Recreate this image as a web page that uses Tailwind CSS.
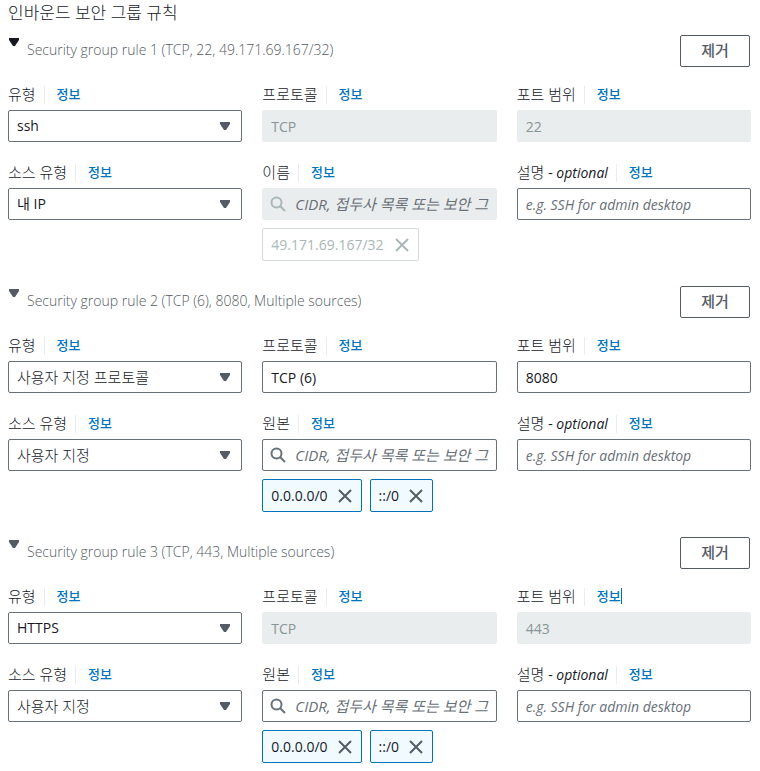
<!DOCTYPE html>
<html lang="ko">
<head>
  <meta charset="UTF-8">
  <meta name="viewport" content="width=device-width, initial-scale=1.0">
  <title>인바운드 보안 그룹 규칙</title>
  <script src="https://cdn.jsdelivr.net/npm/@tailwindcss/browser@4"></script>
</head>
<body class="bg-white text-[#16191f] font-['Open_Sans','Noto_Sans_CJK_KR',sans-serif] text-sm leading-5">

  <!-- Shared icons -->
  <svg class="hidden" xmlns="http://www.w3.org/2000/svg">
    <symbol id="caret" viewBox="0 0 10 8"><path d="M0 0h10v2L6 8H4L0 2z" fill="currentColor"/></symbol>
    <symbol id="search" viewBox="0 0 16 16"><circle cx="6.5" cy="6.5" r="5" fill="none" stroke="currentColor" stroke-width="2"/><path d="M10 10l5 5" stroke="currentColor" stroke-width="2"/></symbol>
    <symbol id="close" viewBox="0 0 14 14"><path d="M1 1l12 12M13 1L1 13" fill="none" stroke="currentColor" stroke-width="2"/></symbol>
  </svg>

  <main class="pl-2 pr-[9px] pb-2">
    <h2 class="text-[17px] leading-[26px] mb-[9px] font-light">인바운드 보안 그룹 규칙</h2>

    <!-- Rule 1 -->
    <section class="mb-[25px]">
      <header class="flex items-start justify-between mb-[19px] mr-px">
        <div class="flex items-start gap-2 pt-[3px]">
          <button type="button" aria-label="규칙 1 접기" class="w-3 px-px"><svg class="w-full h-2"><use href="#caret"/></svg></button>
          <h3 class="font-light text-[#545b64] mt-0.5 -ml-px">Security group rule 1 (TCP, 22, 49.171.69.167/32)</h3>
        </div>
        <button type="button" class="h-8 w-[70px] border border-[#545b64] rounded-xs text-[15px] leading-7 pb-0.5 font-medium text-[#545b64]">제거</button>
      </header>
      <div class="grid grid-cols-3 gap-x-5 gap-y-[22px]">
        <div>
          <div class="flex h-[18px] mb-1.5 leading-4">
            <label for="type-1" class="text-[15px] font-light pr-2">유형</label>
            <a href="#" class="border-l border-[#eaeded] pl-3 text-[13px] font-medium text-[#0073bb]">정보</a>
          </div>
          <div class="relative">
            <select id="type-1" class="block appearance-none w-full h-8 px-2 border border-[#687078] rounded-xs bg-white"><option>ssh</option></select>
            <svg class="absolute right-3 top-3 w-2.5 h-2 text-[#545b64] pointer-events-none"><use href="#caret"/></svg>
          </div>
        </div>
        <div>
          <div class="flex h-[18px] mb-1.5 leading-4">
            <label for="protocol-1" class="text-[15px] font-light pr-2">프로토콜</label>
            <a href="#" class="border-l border-[#eaeded] pl-3 text-[13px] font-medium text-[#0073bb]">정보</a>
          </div>
          <input id="protocol-1" type="text" value="TCP" disabled class="block w-full h-8 px-[9px] rounded-xs bg-[#eaeded] text-[#879596]">
        </div>
        <div>
          <div class="flex h-[18px] mb-1.5 leading-4">
            <label for="port-1" class="text-[15px] font-light pr-2">포트 범위</label>
            <a href="#" class="border-l border-[#eaeded] pl-3 text-[13px] font-medium text-[#0073bb]">정보</a>
          </div>
          <input id="port-1" type="text" value="22" disabled class="block w-full h-8 px-[9px] rounded-xs bg-[#eaeded] text-[#879596]">
        </div>
        <div>
          <div class="flex h-[18px] mb-1.5 leading-4">
            <label for="source-type-1" class="text-[15px] font-light pr-2">소스 유형</label>
            <a href="#" class="border-l border-[#eaeded] pl-3 text-[13px] font-medium text-[#0073bb]">정보</a>
          </div>
          <div class="relative">
            <select id="source-type-1" class="block appearance-none w-full h-8 px-2 border border-[#687078] rounded-xs bg-white"><option>내 IP</option></select>
            <svg class="absolute right-3 top-3 w-2.5 h-2 text-[#545b64] pointer-events-none"><use href="#caret"/></svg>
          </div>
        </div>
        <div>
          <div class="flex h-[18px] mb-1.5 leading-4">
            <label for="source-1" class="text-[15px] font-light pr-2">이름</label>
            <a href="#" class="border-l border-[#eaeded] pl-3 text-[13px] font-medium text-[#0073bb]">정보</a>
          </div>
          <div class="relative">
            <svg class="absolute left-2 top-2 w-4 h-4 text-[#aab7b8] pointer-events-none"><use href="#search"/></svg>
            <input id="source-1" type="text" placeholder="CIDR, 접두사 목록 또는 보안 그룹" disabled class="block w-full h-8 pl-[33px] pr-2 rounded-xs bg-[#eaeded] text-[15px] placeholder:italic placeholder:text-[#687078]">
          </div>
          <div class="flex gap-2 mt-2">
            <span class="flex items-center gap-[11px] h-[33px] px-2 pr-[9px] border border-[#d5dbdb] rounded-xs text-[#aab7b8]">49.171.69.167/32
              <button type="button" disabled aria-label="49.171.69.167/32 제거"><svg class="block w-3.5 h-3.5"><use href="#close"/></svg></button>
            </span>
          </div>
        </div>
        <div>
          <div class="flex h-[18px] mb-1.5 leading-4">
            <label for="desc-1" class="text-[15px] font-light pr-2">설명 <span class="text-sm leading-4 font-normal">- <i>optional</i></span></label>
            <a href="#" class="border-l border-[#eaeded] pl-3 text-[13px] font-medium text-[#0073bb]">정보</a>
          </div>
          <input id="desc-1" type="text" placeholder="e.g. SSH for admin desktop" class="block w-full h-8 px-2 border border-[#687078] rounded-xs placeholder:italic placeholder:text-[#687078]">
        </div>
      </div>
    </section>

    <!-- Rule 2 -->
    <section class="mb-[25px]">
      <header class="flex items-start justify-between mb-[19px] mr-px">
        <div class="flex items-start gap-2 pt-[3px]">
          <button type="button" aria-label="규칙 2 접기" class="w-3 px-px text-[#545b64]"><svg class="w-full h-2"><use href="#caret"/></svg></button>
          <h3 class="font-light text-[#545b64] mt-0.5 -ml-px">Security group rule 2 (TCP (6), 8080, Multiple sources)</h3>
        </div>
        <button type="button" class="h-8 w-[70px] border border-[#545b64] rounded-xs text-[15px] leading-7 pb-0.5 font-medium text-[#545b64]">제거</button>
      </header>
      <div class="grid grid-cols-3 gap-x-5 gap-y-[22px]">
        <div>
          <div class="flex h-[18px] mb-1.5 leading-4">
            <label for="type-2" class="text-[15px] font-light pr-2">유형</label>
            <a href="#" class="border-l border-[#eaeded] pl-3 text-[13px] font-medium text-[#0073bb]">정보</a>
          </div>
          <div class="relative">
            <select id="type-2" class="block appearance-none w-full h-8 px-2 border border-[#687078] rounded-xs bg-white text-[15px] font-light"><option>사용자 지정 프로토콜</option></select>
            <svg class="absolute right-3 top-3 w-2.5 h-2 text-[#545b64] pointer-events-none"><use href="#caret"/></svg>
          </div>
        </div>
        <div>
          <div class="flex h-[18px] mb-1.5 leading-4">
            <label for="protocol-2" class="text-[15px] font-light pr-2">프로토콜</label>
            <a href="#" class="border-l border-[#eaeded] pl-3 text-[13px] font-medium text-[#0073bb]">정보</a>
          </div>
          <input id="protocol-2" type="text" value="TCP (6)" class="block w-full h-8 px-2 border border-[#687078] rounded-xs">
        </div>
        <div>
          <div class="flex h-[18px] mb-1.5 leading-4">
            <label for="port-2" class="text-[15px] font-light pr-2">포트 범위</label>
            <a href="#" class="border-l border-[#eaeded] pl-3 text-[13px] font-medium text-[#0073bb]">정보</a>
          </div>
          <input id="port-2" type="text" value="8080" class="block w-full h-8 px-2 border border-[#687078] rounded-xs">
        </div>
        <div>
          <div class="flex h-[18px] mb-1.5 leading-4">
            <label for="source-type-2" class="text-[15px] font-light pr-2">소스 유형</label>
            <a href="#" class="border-l border-[#eaeded] pl-3 text-[13px] font-medium text-[#0073bb]">정보</a>
          </div>
          <div class="relative">
            <select id="source-type-2" class="block appearance-none w-full h-8 px-2 border border-[#687078] rounded-xs bg-white text-[15px] font-light"><option>사용자 지정</option></select>
            <svg class="absolute right-3 top-3 w-2.5 h-2 text-[#545b64] pointer-events-none"><use href="#caret"/></svg>
          </div>
        </div>
        <div>
          <div class="flex h-[18px] mb-1.5 leading-4">
            <label for="source-2" class="text-[15px] font-light pr-2">원본</label>
            <a href="#" class="border-l border-[#eaeded] pl-3 text-[13px] font-medium text-[#0073bb]">정보</a>
          </div>
          <div class="relative">
            <svg class="absolute left-2 top-2 w-4 h-4 text-[#687078] pointer-events-none"><use href="#search"/></svg>
            <input id="source-2" type="text" placeholder="CIDR, 접두사 목록 또는 보안 그룹" class="block w-full h-8 pl-8 pr-[7px] border border-[#687078] rounded-xs text-[15px] placeholder:italic placeholder:text-[#687078]">
          </div>
          <div class="flex gap-2 mt-2">
            <span class="flex items-center gap-[10px] h-[33px] px-2 pr-[9px] border border-[#0073bb] rounded-xs bg-[#f1faff]">0.0.0.0/0
              <button type="button" aria-label="0.0.0.0/0 제거" class="text-[#545b64]"><svg class="block w-3.5 h-3.5"><use href="#close"/></svg></button>
            </span>
            <span class="flex items-center gap-[10px] h-[33px] px-2 pr-[9px] border border-[#0073bb] rounded-xs bg-[#f1faff]">::/0
              <button type="button" aria-label="::/0 제거" class="text-[#545b64]"><svg class="block w-3.5 h-3.5"><use href="#close"/></svg></button>
            </span>
          </div>
        </div>
        <div>
          <div class="flex h-[18px] mb-1.5 leading-4">
            <label for="desc-2" class="text-[15px] font-light pr-2">설명 <span class="text-sm leading-4 font-normal">- <i>optional</i></span></label>
            <a href="#" class="border-l border-[#eaeded] pl-3 text-[13px] font-medium text-[#0073bb]">정보</a>
          </div>
          <input id="desc-2" type="text" placeholder="e.g. SSH for admin desktop" class="block w-full h-8 px-2 border border-[#687078] rounded-xs placeholder:italic placeholder:text-[#687078]">
        </div>
      </div>
    </section>

    <!-- Rule 3 -->
    <section>
      <header class="flex items-start justify-between mb-[19px] mr-px">
        <div class="flex items-start gap-2 pt-[3px]">
          <button type="button" aria-label="규칙 3 접기" class="w-3 px-px text-[#545b64]"><svg class="w-full h-2"><use href="#caret"/></svg></button>
          <h3 class="font-light text-[#545b64] mt-0.5 -ml-px">Security group rule 3 (TCP, 443, Multiple sources)</h3>
        </div>
        <button type="button" class="h-8 w-[70px] border border-[#545b64] rounded-xs text-[15px] leading-7 pb-0.5 font-medium text-[#545b64]">제거</button>
      </header>
      <div class="grid grid-cols-3 gap-x-5 gap-y-[22px]">
        <div>
          <div class="flex h-[18px] mb-1.5 leading-4">
            <label for="type-3" class="text-[15px] font-light pr-2">유형</label>
            <a href="#" class="border-l border-[#eaeded] pl-3 text-[13px] font-medium text-[#0073bb]">정보</a>
          </div>
          <div class="relative">
            <select id="type-3" class="block appearance-none w-full h-8 px-2 border border-[#687078] rounded-xs bg-white"><option>HTTPS</option></select>
            <svg class="absolute right-3 top-3 w-2.5 h-2 text-[#545b64] pointer-events-none"><use href="#caret"/></svg>
          </div>
        </div>
        <div>
          <div class="flex h-[18px] mb-1.5 leading-4">
            <label for="protocol-3" class="text-[15px] font-light pr-2">프로토콜</label>
            <a href="#" class="border-l border-[#eaeded] pl-3 text-[13px] font-medium text-[#0073bb]">정보</a>
          </div>
          <input id="protocol-3" type="text" value="TCP" disabled class="block w-full h-8 px-[9px] rounded-xs bg-[#eaeded] text-[#879596]">
        </div>
        <div>
          <div class="flex h-[18px] mb-1.5 leading-4">
            <label for="port-3" class="text-[15px] font-light pr-2">포트 범위</label>
            <a href="#" class="border-l border-[#eaeded] pl-3 text-[13px] font-medium text-[#0073bb]"><span class="block border-r border-[#0073bb]">정보</span></a>
          </div>
          <input id="port-3" type="text" value="443" disabled class="block w-full h-8 px-[9px] rounded-xs bg-[#eaeded] text-[#879596]">
        </div>
        <div>
          <div class="flex h-[18px] mb-1.5 leading-4">
            <label for="source-type-3" class="text-[15px] font-light pr-2">소스 유형</label>
            <a href="#" class="border-l border-[#eaeded] pl-3 text-[13px] font-medium text-[#0073bb]">정보</a>
          </div>
          <div class="relative">
            <select id="source-type-3" class="block appearance-none w-full h-8 px-2 border border-[#687078] rounded-xs bg-white text-[15px] font-light"><option>사용자 지정</option></select>
            <svg class="absolute right-3 top-3 w-2.5 h-2 text-[#545b64] pointer-events-none"><use href="#caret"/></svg>
          </div>
        </div>
        <div>
          <div class="flex h-[18px] mb-1.5 leading-4">
            <label for="source-3" class="text-[15px] font-light pr-2">원본</label>
            <a href="#" class="border-l border-[#eaeded] pl-3 text-[13px] font-medium text-[#0073bb]">정보</a>
          </div>
          <div class="relative">
            <svg class="absolute left-2 top-2 w-4 h-4 text-[#687078] pointer-events-none"><use href="#search"/></svg>
            <input id="source-3" type="text" placeholder="CIDR, 접두사 목록 또는 보안 그룹" class="block w-full h-8 pl-8 pr-[7px] border border-[#687078] rounded-xs text-[15px] placeholder:italic placeholder:text-[#687078]">
          </div>
          <div class="flex gap-2 mt-2">
            <span class="flex items-center gap-[10px] h-[33px] px-2 pr-[9px] border border-[#0073bb] rounded-xs bg-[#f1faff]">0.0.0.0/0
              <button type="button" aria-label="0.0.0.0/0 제거" class="text-[#545b64]"><svg class="block w-3.5 h-3.5"><use href="#close"/></svg></button>
            </span>
            <span class="flex items-center gap-[10px] h-[33px] px-2 pr-[9px] border border-[#0073bb] rounded-xs bg-[#f1faff]">::/0
              <button type="button" aria-label="::/0 제거" class="text-[#545b64]"><svg class="block w-3.5 h-3.5"><use href="#close"/></svg></button>
            </span>
          </div>
        </div>
        <div>
          <div class="flex h-[18px] mb-1.5 leading-4">
            <label for="desc-3" class="text-[15px] font-light pr-2">설명 <span class="text-sm leading-4 font-normal">- <i>optional</i></span></label>
            <a href="#" class="border-l border-[#eaeded] pl-3 text-[13px] font-medium text-[#0073bb]">정보</a>
          </div>
          <input id="desc-3" type="text" placeholder="e.g. SSH for admin desktop" class="block w-full h-8 px-2 border border-[#687078] rounded-xs placeholder:italic placeholder:text-[#687078]">
        </div>
      </div>
    </section>
  </main>

</body>
</html>
